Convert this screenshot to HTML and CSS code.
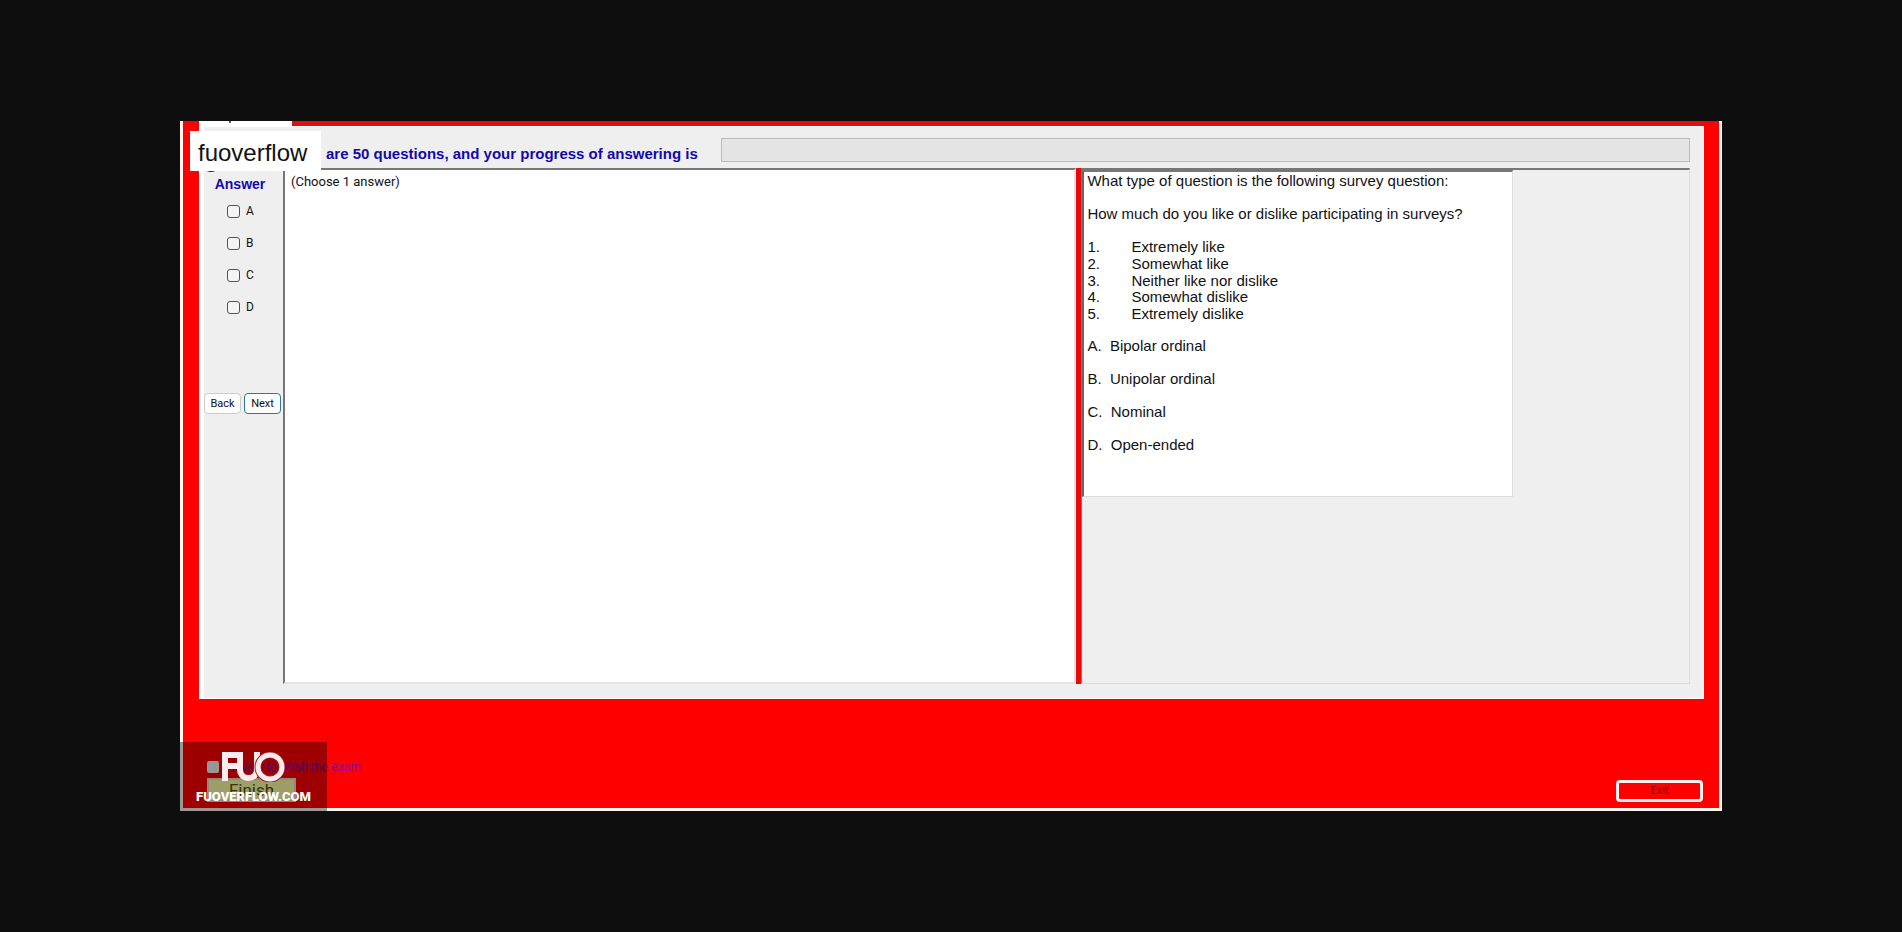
FILE: index.html
```html
<!DOCTYPE html>
<html lang="en">
<head>
<meta charset="utf-8">
<title>Exam</title>
<link rel="stylesheet" href="styles.css">
</head>
<body>
<main class="window">
  <div class="tab-strip"><span class="tab"><span class="tab-mark"></span></span></div>
  <section class="panel">
    <header class="header">
      <h1 class="progress-label" id="progress-label">are 50 questions, and your progress of answering is</h1>
      <div class="progress" role="progressbar" aria-labelledby="progress-label" aria-valuenow="0"></div>
    </header>
    <div class="body">
      <form class="answers">
        <h2 class="answers-title">Answer</h2>
        <label class="option"><input type="checkbox" class="box">A</label>
        <label class="option"><input type="checkbox" class="box">B</label>
        <label class="option"><input type="checkbox" class="box">C</label>
        <label class="option"><input type="checkbox" class="box">D</label>
        <div class="nav">
          <button type="button" class="nav-button">Back</button>
          <button type="button" class="nav-button nav-next">Next</button>
        </div>
      </form>
      <div class="split">
        <div class="pane">(Choose 1 answer)</div>
        <div class="splitter"></div>
        <div class="side">
          <article class="question">
            <p>What type of question is the following survey question:</p>
            <p>How much do you like or dislike participating in surveys?</p>
            <ol class="scale">
              <li><span>1.</span>Extremely like</li>
              <li><span>2.</span>Somewhat like</li>
              <li><span>3.</span>Neither like nor dislike</li>
              <li><span>4.</span>Somewhat dislike</li>
              <li><span>5.</span>Extremely dislike</li>
            </ol>
            <p>A.&nbsp; Bipolar ordinal</p>
            <p>B.&nbsp; Unipolar ordinal</p>
            <p>C.&nbsp; Nominal</p>
            <p>D.&nbsp; Open-ended</p>
          </article>
        </div>
      </div>
    </div>
  </section>
  <footer class="footer">
    <div class="finish">
      <label class="finish-label"><input type="checkbox" class="finish-box">I want to finish the exam</label>
      <button type="button" class="finish-button">Finish</button>
    </div>
    <button type="button" class="exit">Exit</button>
  </footer>
  <svg class="glyph-edge" width="16" height="3" viewBox="0 0 16 3"><path d="M2 0H14Q8 4 2 0Z"/></svg>
  <div class="name-tag">fuoverflow</div>
  <div class="watermark">
    <svg class="logo" viewBox="0 0 63 30" width="63" height="30" fill="none" stroke="#fdecee" stroke-width="6">
      <path d="M3 29V3H17M3 14H15"/>
      <path d="M18 0V17C18 29 35 29 35 17V0"/>
      <circle cx="48" cy="15" r="12" stroke="#a02028" stroke-width="7"/>
      <circle cx="48" cy="15" r="12" stroke-width="5"/>
    </svg>
    <div class="site">FUOVERFLOW.COM</div>
  </div>
</main>
</body>
</html>
```

FILE: styles.css
```css
* { box-sizing: border-box; }
body {
  margin: 0;
  min-height: 100vh;
  padding: 121px 180px;
  display: flex;
  background: #0e0e0e;
  font-family: "Liberation Sans", Arial, sans-serif;
  color: #111;
}
h1, h2, p, ol { margin: 0; padding: 0; }
button { padding: 0; font-family: Roboto, sans-serif; }
.window {
  position: relative;
  flex: 1;
  display: flex;
  flex-direction: column;
  padding: 0 15px 0 16px;
  background: #f00;
  border: 3px solid #fff4ee;
  border-top: 0;
}
.tab-strip { height: 5px; background: #dd1010; }
.tab { display: block; width: 93px; height: 5px; background: #fff; }
.tab-mark { display: block; width: 2px; height: 2px; margin-left: 30px; background: #555; }
.panel {
  background: #efefef;
  border: 1px solid #fff;
  border-left-width: 5px;
  padding: 0 13px 14px 0;
}
.header { display: flex; align-items: center; height: 41px; padding-left: 122px; }
.progress-label {
  width: 395px;
  flex: none;
  padding-top: 12px;
  font-size: 15px;
  line-height: 20px;
  color: #1208b0;
  white-space: nowrap;
}
.progress { flex: 1; height: 24px; margin-top: 4px; background: #e5e5e5; border: 1px solid #bbb; }
.body { display: flex; }
.answers { width: 79px; flex: none; display: flex; flex-direction: column; }
.answers-title { margin: 7px 0 10px; padding-right: 7px; text-align: center; font-size: 14px; line-height: 18px; color: #1208b0; }
.option {
  display: flex;
  align-items: center;
  gap: 6px;
  height: 16px;
  margin: 0 0 16px 23px;
  font: 12px/16px Roboto, sans-serif;
}
.box { appearance: none; width: 13px; height: 13px; margin: 0; border: 1px solid #555; border-radius: 3px; background: #f5f5f5; }
.nav { display: flex; gap: 3px; margin-top: 62px; }
.nav-button { width: 37px; height: 21px; border: 1px solid #ccc; border-radius: 4px; background: #fdfdfd; font-size: 11px; line-height: 16px; color: #111; }
.nav-next { border-color: #2a7a99; }
.split { flex: 1; display: grid; grid-template-columns: 794fr 5px 609fr; min-height: 516px; }
.pane {
  background: #fff;
  border: 2px solid #e4e4e4;
  border-top-color: #777;
  border-left-color: #777;
  padding: 3px 6px;
  font: 13px/18px Roboto, sans-serif;
}
.splitter { background: #e80a0a; }
.side { border: 1px solid #ddd; border-top: 2px solid #777; border-left: 1px solid #876; }
.question {
  display: flex;
  flex-direction: column;
  gap: 16px;
  width: 71%;
  height: 327px;
  padding: 0 3px;
  background: #fff;
  border: 1px solid #ddd;
  border-left: 2px solid #666;
  border-top: 2px solid #777;
  font-size: 15px;
  line-height: 17px;
}
.scale { display: flex; flex-direction: column; justify-content: space-between; height: 83px; list-style: none; }
.scale li { display: flex; height: 16px; }
.scale span { width: 44px; }
.footer { flex: 1; display: flex; align-items: flex-end; justify-content: space-between; padding: 0 1px 6px 8px; }
.finish-label { display: flex; align-items: center; gap: 12px; font-size: 12px; line-height: 16px; color: #7800b8; }
.finish-box { appearance: none; width: 12px; height: 12px; margin: 0; border-radius: 2px; background: #f4f4f4; }
.finish-button { width: 89px; height: 24px; margin-top: 3px; border: 2px solid #f4d8c8; background: #ffffa8; font-size: 17px; line-height: 20px; color: #550; }
.finish { display: flex; flex-direction: column; }
.exit { width: 87px; height: 22px; border: 3px solid #fff0f0; border-radius: 4px; background: #f00; font-size: 11px; line-height: 16px; color: #8a0000; }
.glyph-edge { position: absolute; left: 20px; top: 49px; fill: #111; }
.name-tag { position: absolute; left: 7px; top: 10px; padding: 4px 14px 0 8px; background: #fff; font-size: 24px; line-height: 36px; color: #111; }
.watermark {
  position: absolute;
  left: -3px;
  bottom: -3px;
  width: 147px;
  height: 69px;
  padding-top: 10px;
  display: flex;
  flex-direction: column;
  align-items: center;
  background: rgba(0, 0, 0, .38);
}
.logo { flex: none; }
.site { margin-top: 6px; font: 900 13px/18px Impact, Roboto, sans-serif; color: #fff; }
```
